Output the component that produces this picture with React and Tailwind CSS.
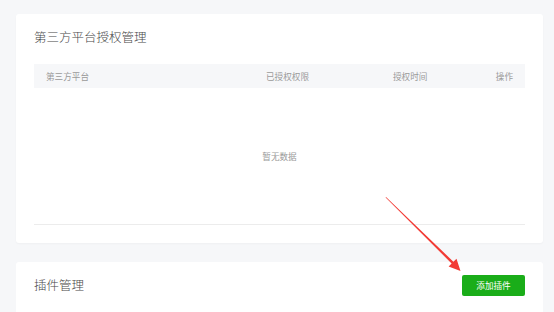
export default function App() {
  const cjk = { fontFamily: '"Noto Sans CJK SC", "Noto Sans", sans-serif' };

  return (
    <div className="relative w-[554px] h-[312px] overflow-hidden bg-[#f6f7f9]" style={cjk}>
      <div className="pt-[14px] pl-[16px]">
        {/* 授权管理 */}
        <section className="w-[527px] bg-white rounded-[3px] px-[18px] pt-[14px] pb-[18px] shadow-[0_1px_2px_rgba(0,0,0,0.03)]">
          <h2 className="text-[12.5px] leading-[18px] text-[#484848] font-light mb-[18px]">第三方平台授权管理</h2>
          <div className="flex items-center h-[24px] bg-[#f6f7f9] text-[8.6px] text-[#9a9a9a] px-[12px]">
            <div className="w-[220px]">第三方平台</div>
            <div className="w-[127px]">已授权权限</div>
            <div className="flex-1">授权时间</div>
            <div className="text-right">操作</div>
          </div>
          <div className="h-[137px] flex items-center justify-center border-b border-[#ececec] text-[8.6px] text-[#9a9a9a]">
            暂无数据
          </div>
        </section>

        {/* 插件管理 */}
        <section className="mt-[19px] w-[527px] h-[80px] bg-white rounded-[3px] px-[18px] pt-[12px]">
          <div className="flex items-center justify-between h-[22px]">
            <h2 className="text-[12.5px] leading-[18px] text-[#484848] font-light">插件管理</h2>
            <button className="w-[63px] h-[21px] rounded-[2px] bg-[#1aad19] text-white text-[8.6px]">添加插件</button>
          </div>
        </section>
      </div>

      <svg className="absolute left-0 top-0 pointer-events-none" width="554" height="312">
        <polygon
          points="386,197 453.4,261.7 456.5,258.8 460.5,271 448.6,266.6 451.6,263.5 385.6,197.4"
          fill="#f23b35"
        />
      </svg>
    </div>
  );
}
